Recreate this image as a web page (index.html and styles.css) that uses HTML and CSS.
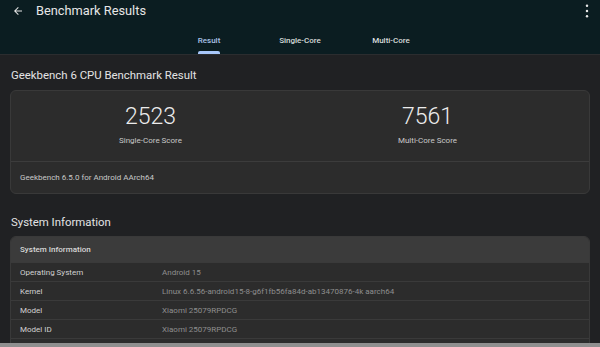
FILE: index.html
```html
<!DOCTYPE html>
<html>
<head>
<meta charset="utf-8">
<link rel="stylesheet" href="styles.css">
</head>
<body>
<div class="page">
  <header class="appbar">
    <div class="toolbar">
      <svg class="back" viewBox="0 0 24 24" width="12" height="12"><path d="M20 11H7.83l5.59-5.59L12 4l-8 8 8 8 1.41-1.41L7.83 13H20v-2z" fill="#e6e6e6"/></svg>
      <div class="title">Benchmark Results</div>
      <svg class="kebab" viewBox="0 0 4 16" width="4" height="14"><circle cx="2" cy="2" r="1.4" fill="#e6e6e6"/><circle cx="2" cy="8" r="1.4" fill="#e6e6e6"/><circle cx="2" cy="14" r="1.4" fill="#e6e6e6"/></svg>
    </div>
    <nav class="tabs">
      <div class="tab active"><span class="tab-label">Result</span><span class="indicator"></span></div>
      <div class="tab"><span class="tab-label">Single-Core</span><span class="indicator"></span></div>
      <div class="tab"><span class="tab-label">Multi-Core</span><span class="indicator"></span></div>
    </nav>
  </header>
  <main class="content">
    <h2 class="section-title first">Geekbench 6 CPU Benchmark Result</h2>
    <section class="card">
      <div class="scores">
        <div class="score">
          <div class="score-value">2523</div>
          <div class="score-label">Single-Core Score</div>
        </div>
        <div class="score">
          <div class="score-value">7561</div>
          <div class="score-label">Multi-Core Score</div>
        </div>
      </div>
      <div class="card-footer">Geekbench 6.5.0 for Android AArch64</div>
    </section>
    <h2 class="section-title second">System Information</h2>
    <section class="card table">
      <div class="table-head">System Information</div>
      <div class="row"><div class="label">Operating System</div><div class="value">Android 15</div></div>
      <div class="row"><div class="label">Kernel</div><div class="value">Linux 6.6.56-android15-8-g6f1fb56fa84d-ab13470876-4k aarch64</div></div>
      <div class="row"><div class="label">Model</div><div class="value">Xiaomi 25079RPDCG</div></div>
      <div class="row"><div class="label">Model ID</div><div class="value">Xiaomi 25079RPDCG</div></div>
      <div class="row"></div>
    </section>
  </main>
  <div class="bottom-strip"></div>
</div>
</body>
</html>
```

FILE: styles.css
```css
* { box-sizing: border-box; }
html, body { margin: 0; padding: 0; }
body {
  font-family: Roboto, "Noto Sans", sans-serif;
  background: #202123;
  color: #e3e3e3;
}
.page {
  width: 600px;
  height: 347px;
  display: flex;
  flex-direction: column;
  overflow: hidden;
}
.appbar {
  background: #0b1d21;
  border-bottom: 1px solid #2b2d2f;
  flex: none;
}
.toolbar {
  height: 21px;
  display: flex;
  align-items: center;
  padding: 0 11px 0 12px;
}
.back { flex: none; }
.title {
  margin-left: 12px;
  font-size: 12.8px;
  color: #e6e6e6;
  flex: 1;
}
.kebab { flex: none; }
.tabs {
  height: 33px;
  display: flex;
  justify-content: center;
}
.tab {
  width: 91px;
  display: flex;
  flex-direction: column;
  align-items: center;
  justify-content: flex-end;
}
.tab-label {
  font-size: 8px;
  font-weight: 500;
  color: #d8dcdc;
  line-height: 10px;
}
.indicator {
  display: block;
  margin-top: 5px;
  height: 3px;
  width: 22px;
  border-radius: 2px 2px 0 0;
  background: transparent;
}
.tab.active .tab-label { color: #a9c2e6; }
.tab.active .indicator { background: #a8c7fa; }
.content {
  flex: 1;
  overflow: hidden;
  padding: 0 10px;
}
.section-title {
  margin: 0;
  font-weight: 400;
  color: #e3e3e3;
  padding-left: 1px;
}
.section-title.first {
  font-size: 11.4px;
  line-height: 14px;
  margin-top: 13px;
  margin-bottom: 8px;
}
.section-title.second {
  font-size: 11.4px;
  line-height: 14px;
  margin-top: 21px;
  margin-bottom: 7px;
}
.card {
  background: #2c2c2c;
  border: 1px solid #393939;
  border-radius: 6px;
  overflow: hidden;
}
.scores {
  display: grid;
  grid-template-columns: 277px 277px;
  padding: 12px 0 15px 1px;
  border-bottom: 1px solid #3c3c3c;
}
.score {
  display: flex;
  flex-direction: column;
  align-items: center;
}
.score-value {
  font-size: 23px;
  font-weight: 300;
  line-height: 28px;
  color: #ececec;
}
.score-label {
  margin-top: 5px;
  font-size: 8px;
  line-height: 10px;
  color: #c8c8c8;
}
.card-footer {
  height: 31px;
  display: flex;
  align-items: center;
  padding-left: 9px;
  font-size: 8px;
  color: #c8c8c8;
}
.table-head {
  height: 25px;
  background: #3b3b3b;
  display: flex;
  align-items: center;
  padding-left: 9px;
  font-size: 8px;
  color: #d8d8d8;
  font-weight: 500;
}
.row {
  height: 19px;
  display: flex;
  align-items: center;
  border-top: 1px solid #3a3a3a;
  font-size: 8px;
}
.label {
  width: 151px;
  padding-left: 9px;
  color: #d2d2d2;
  flex: none;
}
.value {
  color: #8e8e8e;
  white-space: nowrap;
}
.bottom-strip {
  height: 4px;
  flex: none;
  background: #8f8f8f;
}
```
